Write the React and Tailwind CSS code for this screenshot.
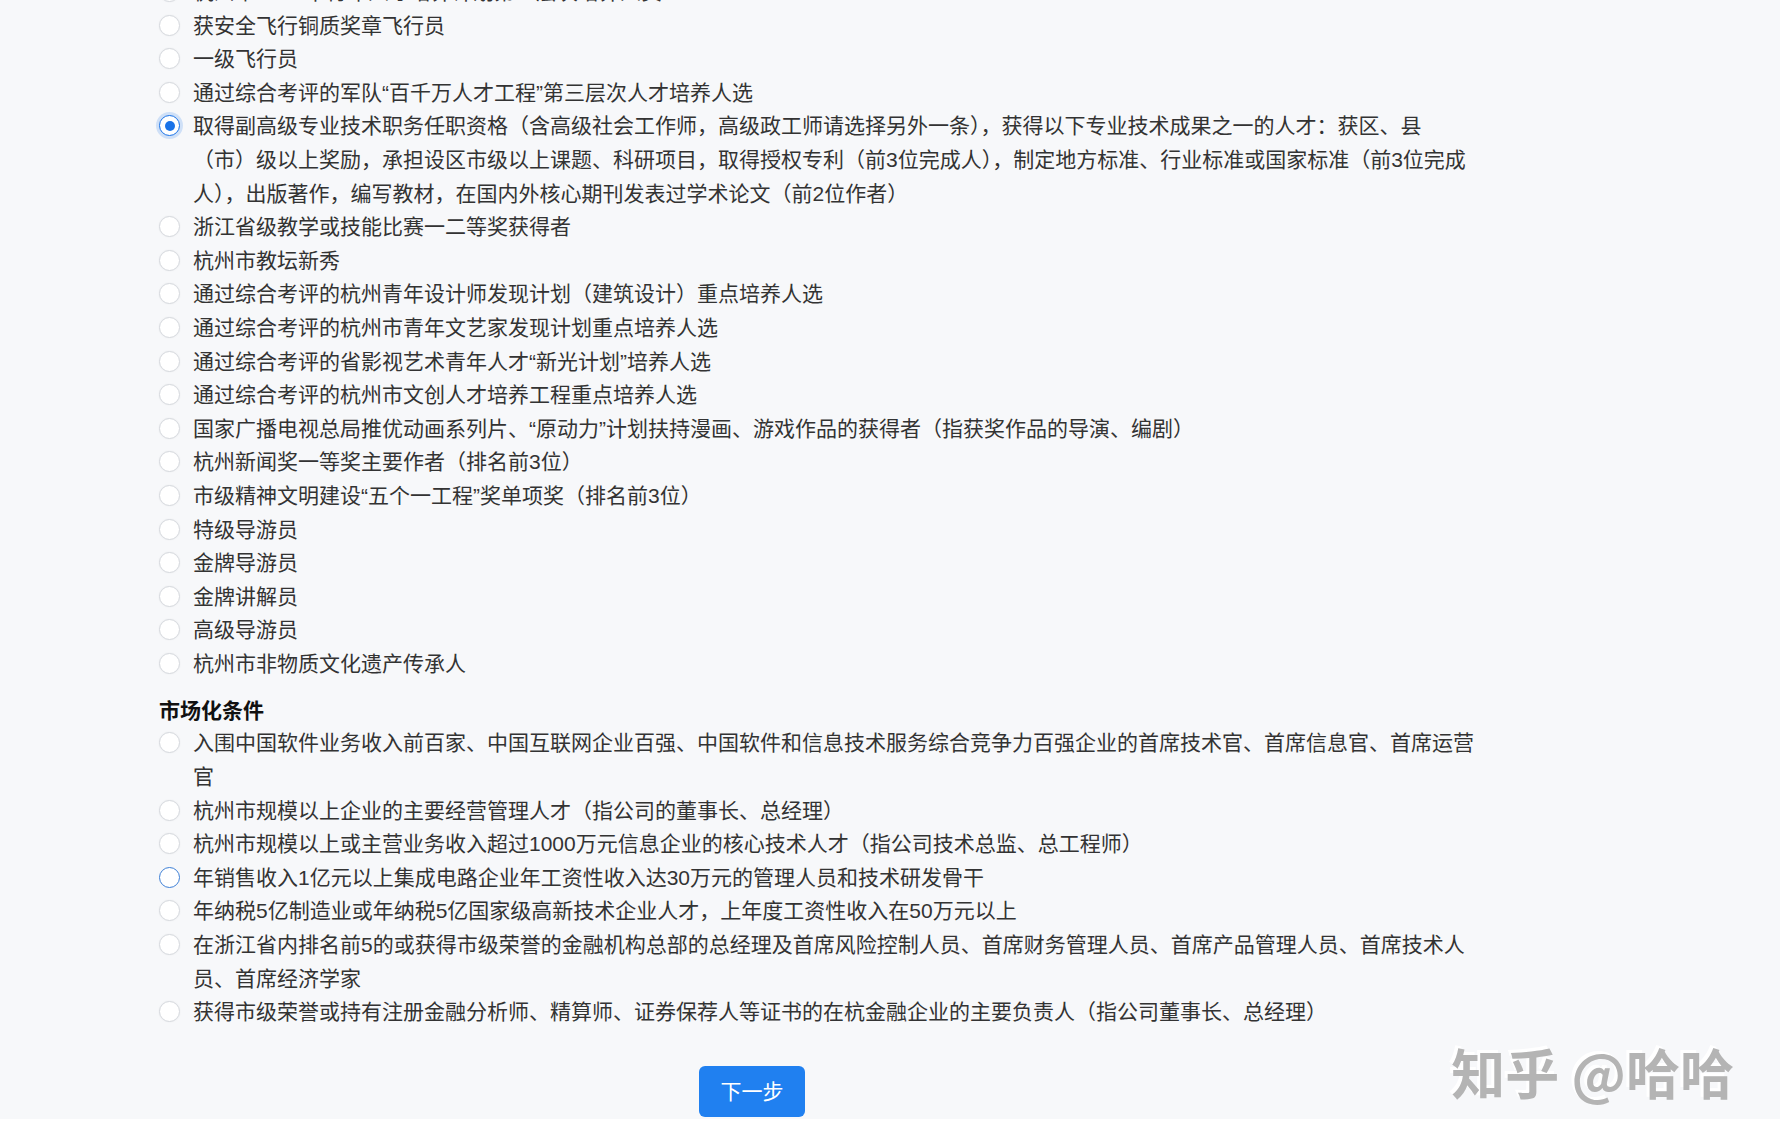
import React from 'react'

const FONT = "font-['Liberation_Sans','Noto_Sans_CJK_SC',sans-serif]"

const SECTION_ONE = [
  { lines: ['杭州市“131”中青年人才培养计划第一层次培养人员'] },
  { lines: ['获安全飞行铜质奖章飞行员'] },
  { lines: ['一级飞行员'] },
  { lines: ['通过综合考评的军队“百千万人才工程”第三层次人才培养人选'] },
  {
    state: 'checked',
    lines: [
      '取得副高级专业技术职务任职资格（含高级社会工作师，高级政工师请选择另外一条），获得以下专业技术成果之一的人才：获区、县',
      '（市）级以上奖励，承担设区市级以上课题、科研项目，取得授权专利（前3位完成人），制定地方标准、行业标准或国家标准（前3位完成',
      '人），出版著作，编写教材，在国内外核心期刊发表过学术论文（前2位作者）',
    ],
  },
  { lines: ['浙江省级教学或技能比赛一二等奖获得者'] },
  { lines: ['杭州市教坛新秀'] },
  { lines: ['通过综合考评的杭州青年设计师发现计划（建筑设计）重点培养人选'] },
  { lines: ['通过综合考评的杭州市青年文艺家发现计划重点培养人选'] },
  { lines: ['通过综合考评的省影视艺术青年人才“新光计划”培养人选'] },
  { lines: ['通过综合考评的杭州市文创人才培养工程重点培养人选'] },
  { lines: ['国家广播电视总局推优动画系列片、“原动力”计划扶持漫画、游戏作品的获得者（指获奖作品的导演、编剧）'] },
  { lines: ['杭州新闻奖一等奖主要作者（排名前3位）'] },
  { lines: ['市级精神文明建设“五个一工程”奖单项奖（排名前3位）'] },
  { lines: ['特级导游员'] },
  { lines: ['金牌导游员'] },
  { lines: ['金牌讲解员'] },
  { lines: ['高级导游员'] },
  { lines: ['杭州市非物质文化遗产传承人'] },
]

const SECTION_TWO = [
  {
    lines: [
      '入围中国软件业务收入前百家、中国互联网企业百强、中国软件和信息技术服务综合竞争力百强企业的首席技术官、首席信息官、首席运营',
      '官',
    ],
  },
  { lines: ['杭州市规模以上企业的主要经营管理人才（指公司的董事长、总经理）'] },
  { lines: ['杭州市规模以上或主营业务收入超过1000万元信息企业的核心技术人才（指公司技术总监、总工程师）'] },
  { state: 'hover', lines: ['年销售收入1亿元以上集成电路企业年工资性收入达30万元的管理人员和技术研发骨干'] },
  { lines: ['年纳税5亿制造业或年纳税5亿国家级高新技术企业人才，上年度工资性收入在50万元以上'] },
  {
    lines: [
      '在浙江省内排名前5的或获得市级荣誉的金融机构总部的总经理及首席风险控制人员、首席财务管理人员、首席产品管理人员、首席技术人',
      '员、首席经济学家',
    ],
  },
  { lines: ['获得市级荣誉或持有注册金融分析师、精算师、证券保荐人等证书的在杭金融企业的主要负责人（指公司董事长、总经理）'] },
]

function Radio({ state }) {
  if (state === 'checked') {
    return (
      <span className="mt-[6px] flex h-[21px] w-[21px] shrink-0 items-center justify-center rounded-full border-[1.5px] border-[#1a73e8] bg-white shadow-[0_0_0_3px_rgba(26,115,232,0.18)]">
        <span className="h-[10px] w-[10px] rounded-full bg-[#1a73e8]" />
      </span>
    )
  }
  if (state === 'hover') {
    return <span className="mt-[6px] h-[21px] w-[21px] shrink-0 rounded-full border-[1.5px] border-[#3d7fd6] bg-white" />
  }
  return <span className="mt-[6px] h-[21px] w-[21px] shrink-0 rounded-full border-[1.5px] border-[#d6d9de] bg-white shadow-[0_0_2px_rgba(0,0,0,0.06)]" />
}

function Option({ state, lines }) {
  return (
    <label className="flex items-start">
      <Radio state={state} />
      <span className="ml-[13px] whitespace-nowrap text-[21px] leading-[33.6px] text-[#333]">
        {lines.map((l, i) => (
          <span key={i} className="block">{l}</span>
        ))}
      </span>
    </label>
  )
}

export default function App() {
  return (
    <div className={`min-h-screen bg-white ${FONT}`}>
      <div className="relative overflow-hidden bg-[#f7f8fa] pb-[2px]">
        <div className="-mt-[25px] pl-[159px]">
          {SECTION_ONE.map((o, i) => (
            <Option key={i} {...o} />
          ))}

          <h3 className="mt-[15px] text-[21px] font-bold leading-[31px] text-[#111]">市场化条件</h3>

          {SECTION_TWO.map((o, i) => (
            <Option key={i} {...o} />
          ))}

          <div className="pl-[540px] pt-[37px]">
            <button className="h-[51px] w-[106px] rounded-[6px] bg-[#2080f0] text-[21px] text-white">下一步</button>
          </div>
        </div>

        {/* watermark */}
        <div className="pointer-events-none absolute bottom-[20px] right-[46px] select-none whitespace-nowrap font-['Noto_Sans_CJK_SC',sans-serif] text-[54px] font-bold leading-none text-[#b4b4b4] [text-shadow:-3px_-3px_0_#ffffff]">
          知乎 @哈哈
        </div>
      </div>
    </div>
  )
}
